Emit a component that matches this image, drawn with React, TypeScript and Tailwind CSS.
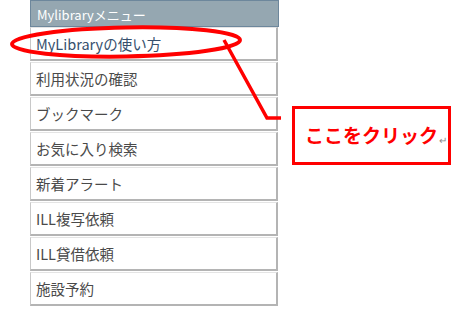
const items = [
  'MyLibraryの使い方',
  '利用状況の確認',
  'ブックマーク',
  'お気に入り検索',
  '新着アラート',
  'ILL複写依頼',
  'ILL貸借依頼',
  '施設予約',
];

export default function App() {
  return (
    <div
      className="relative h-[314px] w-[468px] overflow-hidden bg-white"
      style={{ fontFamily: '"Noto Sans CJK JP", "Noto Sans", sans-serif' }}
    >
      <div className="ml-[30px] w-[249px]">
        <div className="flex h-[27px] items-center border border-[#6d879c] bg-[#95a7b1] pt-[2px] pl-[6px] text-[13px] text-white">
          Mylibraryメニュー
        </div>
        {items.map((label, i) => (
          <div
            key={label}
            className={`mr-[1px] mb-px flex h-[34px] items-center border-t border-r-2 border-b-2 border-l border-t-[#e4e4e4] border-r-[#b4b4b4] border-b-[#b4b4b4] border-l-[#c8c8c8] pl-[5px] text-[14.5px] ${
              i === 0 ? 'text-[#36506e]' : 'text-[#4a4a4a]'
            }`}
          >
            {label}
          </div>
        ))}
      </div>

      <svg className="pointer-events-none absolute top-0 left-0" width="468" height="314">
        <ellipse
          cx="126"
          cy="42"
          rx="114"
          ry="14.5"
          transform="rotate(-1 126 42)"
          fill="none"
          stroke="#ff0000"
          strokeWidth="4"
        />
        <polyline
          points="224,40 267,118 281,118"
          fill="none"
          stroke="#ff0000"
          strokeWidth="3.5"
        />
      </svg>

      <div className="absolute top-[106px] left-[292px] flex h-[59px] w-[159px] items-center border-[3px] border-[#ff0000] pl-[10px]">
        <span className="text-[19px] font-bold text-[#ff0000]">ここをクリック</span>
        <span className="mt-[8px] ml-[1px] text-[10px] text-[#888]">↵</span>
      </div>
    </div>
  );
}
